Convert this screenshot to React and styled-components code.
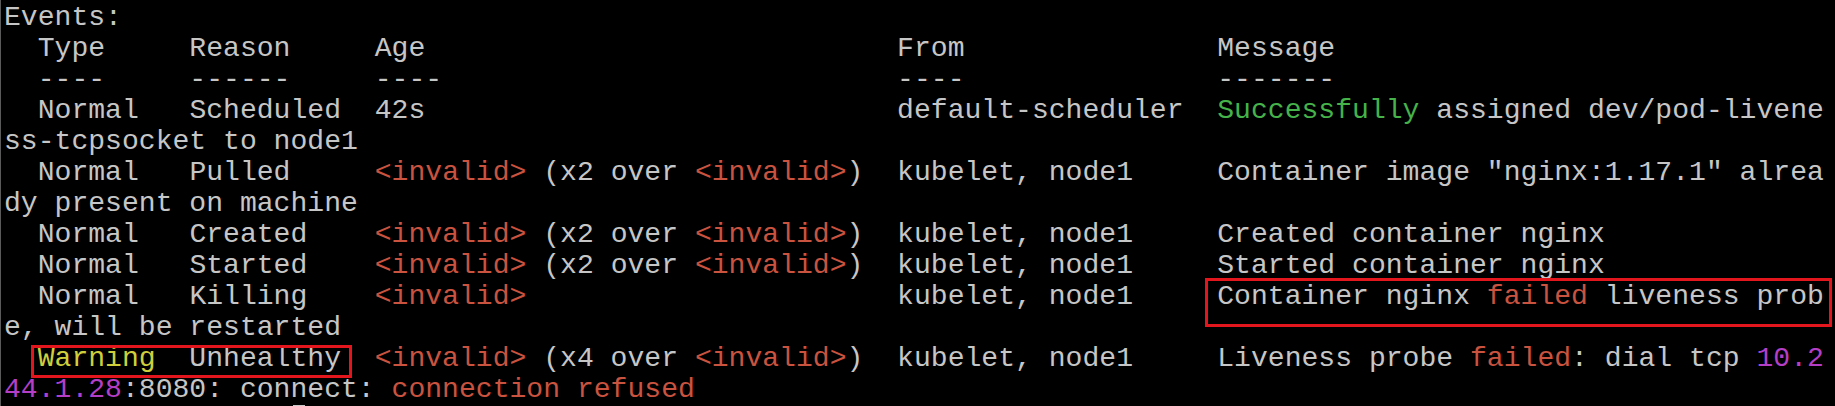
import React from "react";
import styled, { createGlobalStyle } from "styled-components";

const GlobalStyle = createGlobalStyle`
  html, body {
    margin: 0;
    padding: 0;
    background: #000;
    height: 406px;
    overflow: hidden;
  }
`;

const tones = {
  text: "#c6c6c6",
  ok: "#45b24a",
  bad: "#c9533f",
  warn: "#cfcf3c",
  num: "#b43fc6",
};

const Terminal = styled.div`
  box-sizing: border-box;
  height: 406px;
  overflow: hidden;
  padding: 2px 0 0 3px;
  border-left: 1px solid #5a5a5a;
  background: #000;
  color: ${tones.text};
  font-family: "Liberation Mono", "Courier New", monospace;
  font-size: 28.08px;
  line-height: 31px;
`;

const Line = styled.div`
  height: 31px;
  white-space: pre;
`;

const Tone = styled.span`
  color: ${(p) => tones[p.$tone] || tones.text};
`;

const Boxed = styled.span`
  position: relative;
  display: inline-block;

  &::after {
    content: "";
    position: absolute;
    top: ${(p) => p.$top}px;
    right: ${(p) => p.$right}px;
    bottom: ${(p) => p.$bottom}px;
    left: ${(p) => p.$left}px;
    border: 3px solid #e3161d;
    pointer-events: none;
  }
`;

const Cursor = styled.span`
  display: inline-block;
  width: 12px;
  height: 4px;
  margin-left: 3px;
  vertical-align: top;
  background: #c6c6c6;
`;

// pad a list of [text, tone] segments with spaces up to a column width
const pad = (segs, width) => {
  const len = segs.reduce((n, s) => n + s[0].length, 0);
  return [...segs, [" ".repeat(Math.max(width - len, 0))]];
};

const inv = ["<invalid>", "bad"];
const over = (n) => [inv, [` (x${n} over `], inv, [")"]];

const row = (type, reason, age, from, message) => [
  ["  "],
  ...pad(type, 9),
  ...pad([[reason]], 11),
  ...pad(age, 31),
  ...pad([[from]], 19),
  ...message,
];

const lines = [
  [["Events:"]],
  row([["Type"]], "Reason", [["Age"]], "From", [["Message"]]),
  row([["----"]], "------", [["----"]], "----", [["-------"]]),
  row([["Normal"]], "Scheduled", [["42s"]], "default-scheduler", [
    ["Successfully", "ok"],
    [" assigned dev/pod-livene"],
  ]),
  [["ss-tcpsocket to node1"]],
  row([["Normal"]], "Pulled", over(2), "kubelet, node1", [
    ['Container image "nginx:1.17.1" alrea'],
  ]),
  [["dy present on machine"]],
  row([["Normal"]], "Created", over(2), "kubelet, node1", [
    ["Created container nginx"],
  ]),
  row([["Normal"]], "Started", over(2), "kubelet, node1", [
    ["Started container nginx"],
  ]),
  row([["Normal"]], "Killing", [inv], "kubelet, node1", [
    {
      box: { top: -3, right: -8, bottom: -15, left: -12 },
      parts: [["Container nginx "], ["failed", "bad"], [" liveness prob"]],
    },
  ]),
  [["e, will be restarted"]],
  [
    ["  "],
    {
      box: { top: 2, right: -11, bottom: -4, left: -7 },
      parts: [["Warning", "warn"], ["  Unhealthy"]],
    },
    ["  "],
    ...over(4),
    ["  kubelet, node1     Liveness probe "],
    ["failed", "bad"],
    [": dial tcp "],
    ["10.2", "num"],
  ],
  [["44.1.28", "num"], [":8080: connect: "], ["connection refused", "bad"]],
];

const renderParts = (parts) =>
  parts.map(([text, tone], i) => (
    <Tone key={i} $tone={tone}>
      {text}
    </Tone>
  ));

export default function App() {
  return (
    <>
      <GlobalStyle />
      <Terminal>
        {lines.map((segs, i) => (
          <Line key={i}>
            {segs.map((seg, j) =>
              Array.isArray(seg) ? (
                <Tone key={j} $tone={seg[1]}>
                  {seg[0]}
                </Tone>
              ) : (
                <Boxed
                  key={j}
                  $top={seg.box.top}
                  $right={seg.box.right}
                  $bottom={seg.box.bottom}
                  $left={seg.box.left}
                >
                  {renderParts(seg.parts)}
                </Boxed>
              )
            )}
          </Line>
        ))}
        <Line>
          {" ".repeat(17)}
          <Cursor />
        </Line>
      </Terminal>
    </>
  );
}
